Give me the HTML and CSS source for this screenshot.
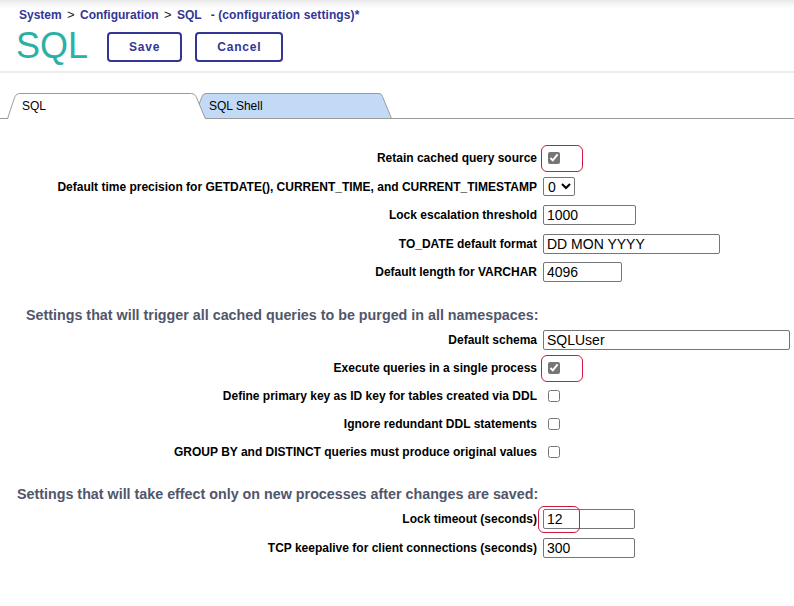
FILE: index.html
```html
<!DOCTYPE html>
<html lang="en">
<head>
  <meta charset="UTF-8" />
  <title>SQL - (configuration settings)</title>
  <link rel="stylesheet" href="styles.css">
</head>
<body>
  <div class="header">
    <div class="breadcrumb">
      <a href="#">System</a> <span class="sep">&gt;</span> <a href="#">Configuration</a> <span class="sep">&gt;</span> <a href="#">SQL</a>
      <span class="dirty">- (configuration settings)*</span>
    </div>
    <div class="title-row">
      <h1>SQL</h1>
      <button class="btn">Save</button>
      <button class="btn">Cancel</button>
    </div>
  </div>
  <div class="divider"></div>

  <div class="tabs">
    <div class="tab active">
      <svg class="tab-bg" width="199" height="26" viewBox="0 0 199 26">
        <path d="M0.5,26 C3,18 6,9 8,3.5 Q9.5,0.5 12.5,0.5 L184.5,0.5 Q187.5,0.5 189,3.5 C191.5,9 195,18 198.5,26" fill="#fff" stroke="#9a9a9a" />
      </svg>
      <span>SQL</span>
    </div>
    <div class="tab">
      <svg class="tab-bg" width="199" height="26" viewBox="0 0 199 26">
        <path d="M0.5,25.5 L9,3.5 Q10,0.5 13,0.5 L186,0.5 Q188.5,0.5 189.5,3.5 L198.5,25.5 Z" fill="#c2daf5" stroke="#9a9a9a" />
      </svg>
      <span>SQL Shell</span>
    </div>
  </div>

  <div class="form">
    <div class="group loose">
      <div class="row">
        <label class="label">Retain cached query source</label>
        <span class="hl"><input type="checkbox" class="check" checked></span>
      </div>
      <div class="row">
        <label class="label">Default time precision for GETDATE(), CURRENT_TIME, and CURRENT_TIMESTAMP</label>
        <select class="select"><option>0</option><option>1</option><option>2</option></select>
      </div>
      <div class="row">
        <label class="label">Lock escalation threshold</label>
        <input type="text" class="field w-93" value="1000">
      </div>
      <div class="row">
        <label class="label">TO_DATE default format</label>
        <input type="text" class="field w-177" value="DD MON YYYY">
      </div>
      <div class="row">
        <label class="label">Default length for VARCHAR</label>
        <input type="text" class="field w-79" value="4096">
      </div>
    </div>

    <h3 class="section first">Settings that will trigger all cached queries to be purged in all namespaces:</h3>
    <div class="group">
      <div class="row">
        <label class="label">Default schema</label>
        <input type="text" class="field w-247" value="SQLUser">
      </div>
      <div class="row">
        <label class="label">Execute queries in a single process</label>
        <span class="hl"><input type="checkbox" class="check" checked></span>
      </div>
      <div class="row">
        <label class="label">Define primary key as ID key for tables created via DDL</label>
        <input type="checkbox" class="check">
      </div>
      <div class="row">
        <label class="label">Ignore redundant DDL statements</label>
        <input type="checkbox" class="check">
      </div>
      <div class="row">
        <label class="label">GROUP BY and DISTINCT queries must produce original values</label>
        <input type="checkbox" class="check">
      </div>
    </div>

    <h3 class="section second">Settings that will take effect only on new processes after changes are saved:</h3>
    <div class="group wide">
      <div class="row">
        <label class="label">Lock timeout (seconds)</label>
        <span class="hl hl-field"><input type="text" class="field w-92" value="12"></span>
      </div>
      <div class="row">
        <label class="label">TCP keepalive for client connections (seconds)</label>
        <input type="text" class="field w-92" value="300">
      </div>
    </div>
  </div>
</body>
</html>
```

FILE: styles.css
```css
* {
  margin: 0;
  padding: 0;
  box-sizing: border-box;
}

body {
  font-family: "Liberation Sans", Arial, sans-serif;
  background: #fff;
  color: #000;
}

.header {
  background: linear-gradient(#e8e8e8 0, #f6f6f6 4px, #fff 9px);
  padding: 8px 0 0 19px;
}

.breadcrumb {
  font-size: 12px;
  line-height: 14px;
  font-weight: bold;
  color: #333695;
}
.breadcrumb a {
  color: #333695;
  text-decoration: none;
}
.breadcrumb .sep {
  font-weight: normal;
  color: #222;
  font-size: 13px;
  margin: 0 2px;
}
.breadcrumb .dirty {
  margin-left: 6px;
  letter-spacing: 0.1px;
}

.title-row {
  display: flex;
  align-items: flex-start;
  margin-top: 5px;
  height: 37px;
}
.title-row h1 {
  font-size: 36px;
  line-height: 37px;
  font-weight: normal;
  color: #2bb0a6;
  margin-left: -3px;
  margin-right: 19px;
}

.btn {
  margin-top: 5px;
  margin-right: 13px;
  height: 30px;
  padding: 0 20px;
  border: 2px solid #333695;
  border-radius: 4px;
  background: #fff;
  color: #333695;
  font-family: "Liberation Sans", Arial, sans-serif;
  font-size: 12px;
  font-weight: bold;
  letter-spacing: 0.8px;
  cursor: pointer;
}

.divider {
  margin-top: 7px;
  height: 2px;
  background: #ececec;
}

.tabs {
  display: flex;
  margin-top: 20px;
  padding-left: 7px;
  height: 26px;
  border-bottom: 1px solid #9a9a9a;
}
.tab {
  position: relative;
  width: 199px;
  height: 26px;
  font-size: 12px;
  line-height: 26px;
  padding-left: 16px;
}
.tab span {
  position: relative;
}
.tab-bg {
  position: absolute;
  left: 0;
  top: 0;
}
.tab.active {
  z-index: 2;
  padding-left: 15px;
}
.tab + .tab {
  margin-left: -13px;
  z-index: 1;
}

.form {
  padding-top: 25px;
}

.row {
  display: flex;
  align-items: center;
  height: 28px;
}
.loose .row {
  height: 28.5px;
}
.wide .row {
  height: 29px;
}

.label {
  width: 538px;
  padding-right: 1px;
  text-align: right;
  font-size: 12px;
  font-weight: bold;
  margin-right: 5px;
}

.section {
  font-size: 14.3px;
  line-height: 22px;
  font-weight: bold;
  color: #50566b;
  padding-left: 17px;
}
.section.first {
  margin-top: 17px;
  padding-left: 26px;
}
.section.second {
  margin-top: 17px;
}

.field {
  height: 20px;
  border: 1px solid #767676;
  border-radius: 2px;
  padding: 0 3px;
  font-family: "Liberation Sans", Arial, sans-serif;
  font-size: 14px;
  color: #000;
}
.w-79 { width: 79px; }
.w-92 { width: 92px; }
.w-93 { width: 93px; }
.w-177 { width: 177px; }
.w-247 { width: 247px; }

.select {
  height: 19px;
  width: 32px;
  font-family: "Liberation Sans", Arial, sans-serif;
  font-size: 14px;
  border: 1px solid #767676;
  border-radius: 2px;
  background: #fff;
}

.check {
  width: 12px;
  height: 12px;
  margin: 0 0 0 5px;
  accent-color: #767676;
}

.hl {
  position: relative;
  display: inline-flex;
  align-items: center;
}
.hl::after {
  content: "";
  position: absolute;
  left: -2px;
  top: -7px;
  width: 40px;
  height: 25px;
  border: 1px solid #d4163f;
  border-radius: 6px;
}
.hl-field::after {
  left: -5px;
  top: -3px;
}
```
